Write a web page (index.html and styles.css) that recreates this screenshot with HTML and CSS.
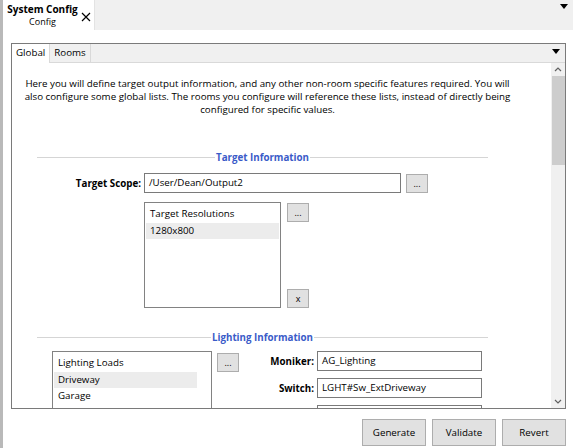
FILE: index.html
```html
<!DOCTYPE html>
<html>
<head>
<meta charset="utf-8">
<link rel="stylesheet" href="styles.css">
</head>
<body>
<div class="app">
  <div class="edge"></div>
  <div class="main">
    <div class="doc-tabs">
      <div class="doc-tab">
        <div class="doc-tab-text">
          <div class="doc-title">System Config</div>
          <div class="doc-sub">Config</div>
        </div>
        <svg class="close" width="10" height="10" viewBox="0 0 10 10"><path d="M1 1L9 9M9 1L1 9" stroke="#000" stroke-width="1.2"/></svg>
      </div>
      <div class="doc-fill"></div>
      <svg class="drop" width="8" height="5" viewBox="0 0 8 5"><path d="M0 0H8L4 5Z" fill="#000"/></svg>
    </div>
    <div class="content">
      <div class="tabctl">
        <div class="tab-head">
          <div class="tab active">Global</div>
          <div class="tab">Rooms</div>
          <div class="tab-fill"></div>
          <svg class="drop2" width="8" height="5" viewBox="0 0 8 5"><path d="M0 0H8L4 5Z" fill="#000"/></svg>
        </div>
        <div class="tab-body">
          <div class="scroll">
            <p class="intro">Here you will define target output information, and any other non-room specific features required. You will also configure some global lists. The rooms you configure will reference these lists, instead of directly being configured for specific values.</p>
            <div class="sep sep-target"><span class="sep-line"></span><span class="sep-title">Target Information</span><span class="sep-line"></span></div>
            <div class="scope-row">
              <label class="lbl scope-lbl">Target Scope:</label>
              <div class="input scope-input">/User/Dean/Output2</div>
              <div class="btn small">...</div>
            </div>
            <div class="res-row">
              <div class="list res-list">
                <div class="list-head">Target Resolutions</div>
                <div class="list-item sel">1280x800</div>
              </div>
              <div class="res-btns">
                <div class="btn small">...</div>
                <div class="btn small">x</div>
              </div>
            </div>
            <div class="sep sep-light"><span class="sep-line"></span><span class="sep-title">Lighting Information</span><span class="sep-line"></span></div>
            <div class="light-row">
              <div class="list light-list">
                <div class="list-head">Lighting Loads</div>
                <div class="list-item sel">Driveway</div>
                <div class="list-item">Garage</div>
              </div>
              <div class="btn small light-btn">...</div>
              <div class="fields">
                <div class="field"><label class="lbl field-lbl">Moniker:</label><div class="input field-input">AG_Lighting</div></div>
                <div class="field"><label class="lbl field-lbl">Switch:</label><div class="input field-input">LGHT#Sw_ExtDriveway</div></div>
                <div class="field"><label class="lbl field-lbl"></label><div class="input field-input"></div></div>
              </div>
            </div>
          </div>
          <div class="vscroll">
            <svg class="arr" width="14" height="13" viewBox="0 0 14 13"><path d="M4 8L7 5L10 8" fill="none" stroke="#606060" stroke-width="1.2"/></svg>
            <div class="thumb"></div>
            <div class="track"></div>
            <svg class="arr" width="14" height="13" viewBox="0 0 14 13"><path d="M4 5L7 8L10 5" fill="none" stroke="#606060" stroke-width="1.2"/></svg>
          </div>
        </div>
      </div>
      <div class="actions">
        <div class="btn big">Generate</div>
        <div class="btn big">Validate</div>
        <div class="btn big">Revert</div>
      </div>
    </div>
  </div>
</div>
</body>
</html>
```
FILE: styles.css
```css
* { box-sizing: border-box; }
html, body { margin: 0; padding: 0; }
body {
  width: 573px; height: 448px; overflow: hidden;
  background: #fff;
  font-family: "Open Sans", "Noto Sans", sans-serif;
  font-size: 9.75px;
  color: #000;
}
.app { display: flex; height: 448px; }
.edge { width: 3px; background: #b9b9b9; flex: none; }
.main { flex: 1; display: flex; flex-direction: column; }

.doc-tabs { height: 30px; display: flex; align-items: flex-start; background: #f0f0f0; flex: none; }
.doc-tab { width: 92px; height: 30px; background: #fff; display: flex; align-items: flex-start; padding: 3px 0 0 3px; border-right: 1px solid #e3e3e3; }
.doc-tab-text { display: flex; flex-direction: column; align-items: center; width: 73px; white-space: nowrap; }
.doc-title { font-weight: bold; font-size: 10px; line-height: 13px; }
.doc-sub { font-size: 9px; line-height: 11px; }
.close { margin: 9px 0 0 2px; }
.doc-fill { flex: 1; }
.drop { margin: 4px 5px 0 0; }

.content { flex: 1; display: flex; flex-direction: column; padding: 13px 7px 0 8px; }
.tabctl { height: 366px; border: 1px solid #7a7a7a; display: flex; flex-direction: column; flex: none; }
.tab-head { height: 19px; display: flex; align-items: stretch; background: #f0f0f0; border-bottom: 1px solid #d9d9d9; flex: none; }
.tab { padding: 0 4px; line-height: 17px; border: 1px solid #d9d9d9; border-top: none; border-bottom: none; }
.tab.active { background: #fff; border-left: none; height: 19px; }
.tab + .tab { border-left: none; }
.tab-fill { flex: 1; }
.drop2 { margin: 5px 5px 0 0; }

.tab-body { flex: 1; display: flex; min-height: 0; }
.scroll { flex: 1; overflow: hidden; }
.intro { margin: 14px 38px 0 10px; text-align: center; line-height: 13px; }

.sep { display: flex; align-items: center; margin-left: 25px; width: 451px; }
.sep-line { flex: 1; height: 1px; background: #d5d5d5; }
.sep-title { color: #3a5bc8; font-weight: bold; padding: 0 1px; line-height: 13px; }
.sep-target { margin-top: 35px; }
.sep-light { margin-top: 23px; }

.scope-row { display: flex; align-items: center; margin-top: 9px; margin-left: 25px; }
.lbl { font-weight: bold; text-align: right; }
.scope-lbl { width: 104px; margin-right: 3px; }
.input { border: 1px solid #7a7a7a; height: 20px; line-height: 18px; padding: 0 4px; background: #fff; white-space: nowrap; overflow: hidden; }
.scope-input { width: 257px; }
.btn { background: #e1e1e1; border: 1px solid #adadad; display: flex; align-items: center; justify-content: center; }
.btn.small { width: 22px; height: 19px; font-size: 9px; }
.scope-row .btn { margin-left: 5px; }

.res-row { display: flex; margin-top: 9px; margin-left: 132px; }
.list { border: 1px solid #828282; padding: 0 1px; background: #fff; }
.res-list { width: 137px; height: 106px; }
.list-head { padding: 3px 4px 1px; line-height: 16px; }
.list-item { padding: 0 4px; line-height: 16px; }
.list-item.sel { background: #ececec; }
.res-btns { display: flex; flex-direction: column; justify-content: space-between; margin-left: 6px; padding: 1px 0 0; }

.light-row { display: flex; align-items: flex-start; margin-top: 7px; margin-left: 40px; }
.light-list { width: 160px; height: 60px; border-bottom: none; overflow: hidden; padding-right: 14px; }
.light-btn { margin-left: 5px; margin-top: 2px; }
.fields { display: flex; flex-direction: column; gap: 7px; margin-top: 0; }
.field { display: flex; align-items: center; }
.field-lbl { width: 75px; margin-right: 3px; }
.field-input { width: 165px; }

.vscroll { width: 14px; background: #f0f0f0; display: flex; flex-direction: column; flex: none; }
.arr { flex: none; }
.thumb { height: 89px; background: #cdcdcd; margin: 0 0 0 1px; flex: none; }
.track { flex: 1; }

.actions { display: flex; justify-content: flex-end; gap: 6px; margin-top: 10px; }
.btn.big { width: 64px; height: 27px; }
```
